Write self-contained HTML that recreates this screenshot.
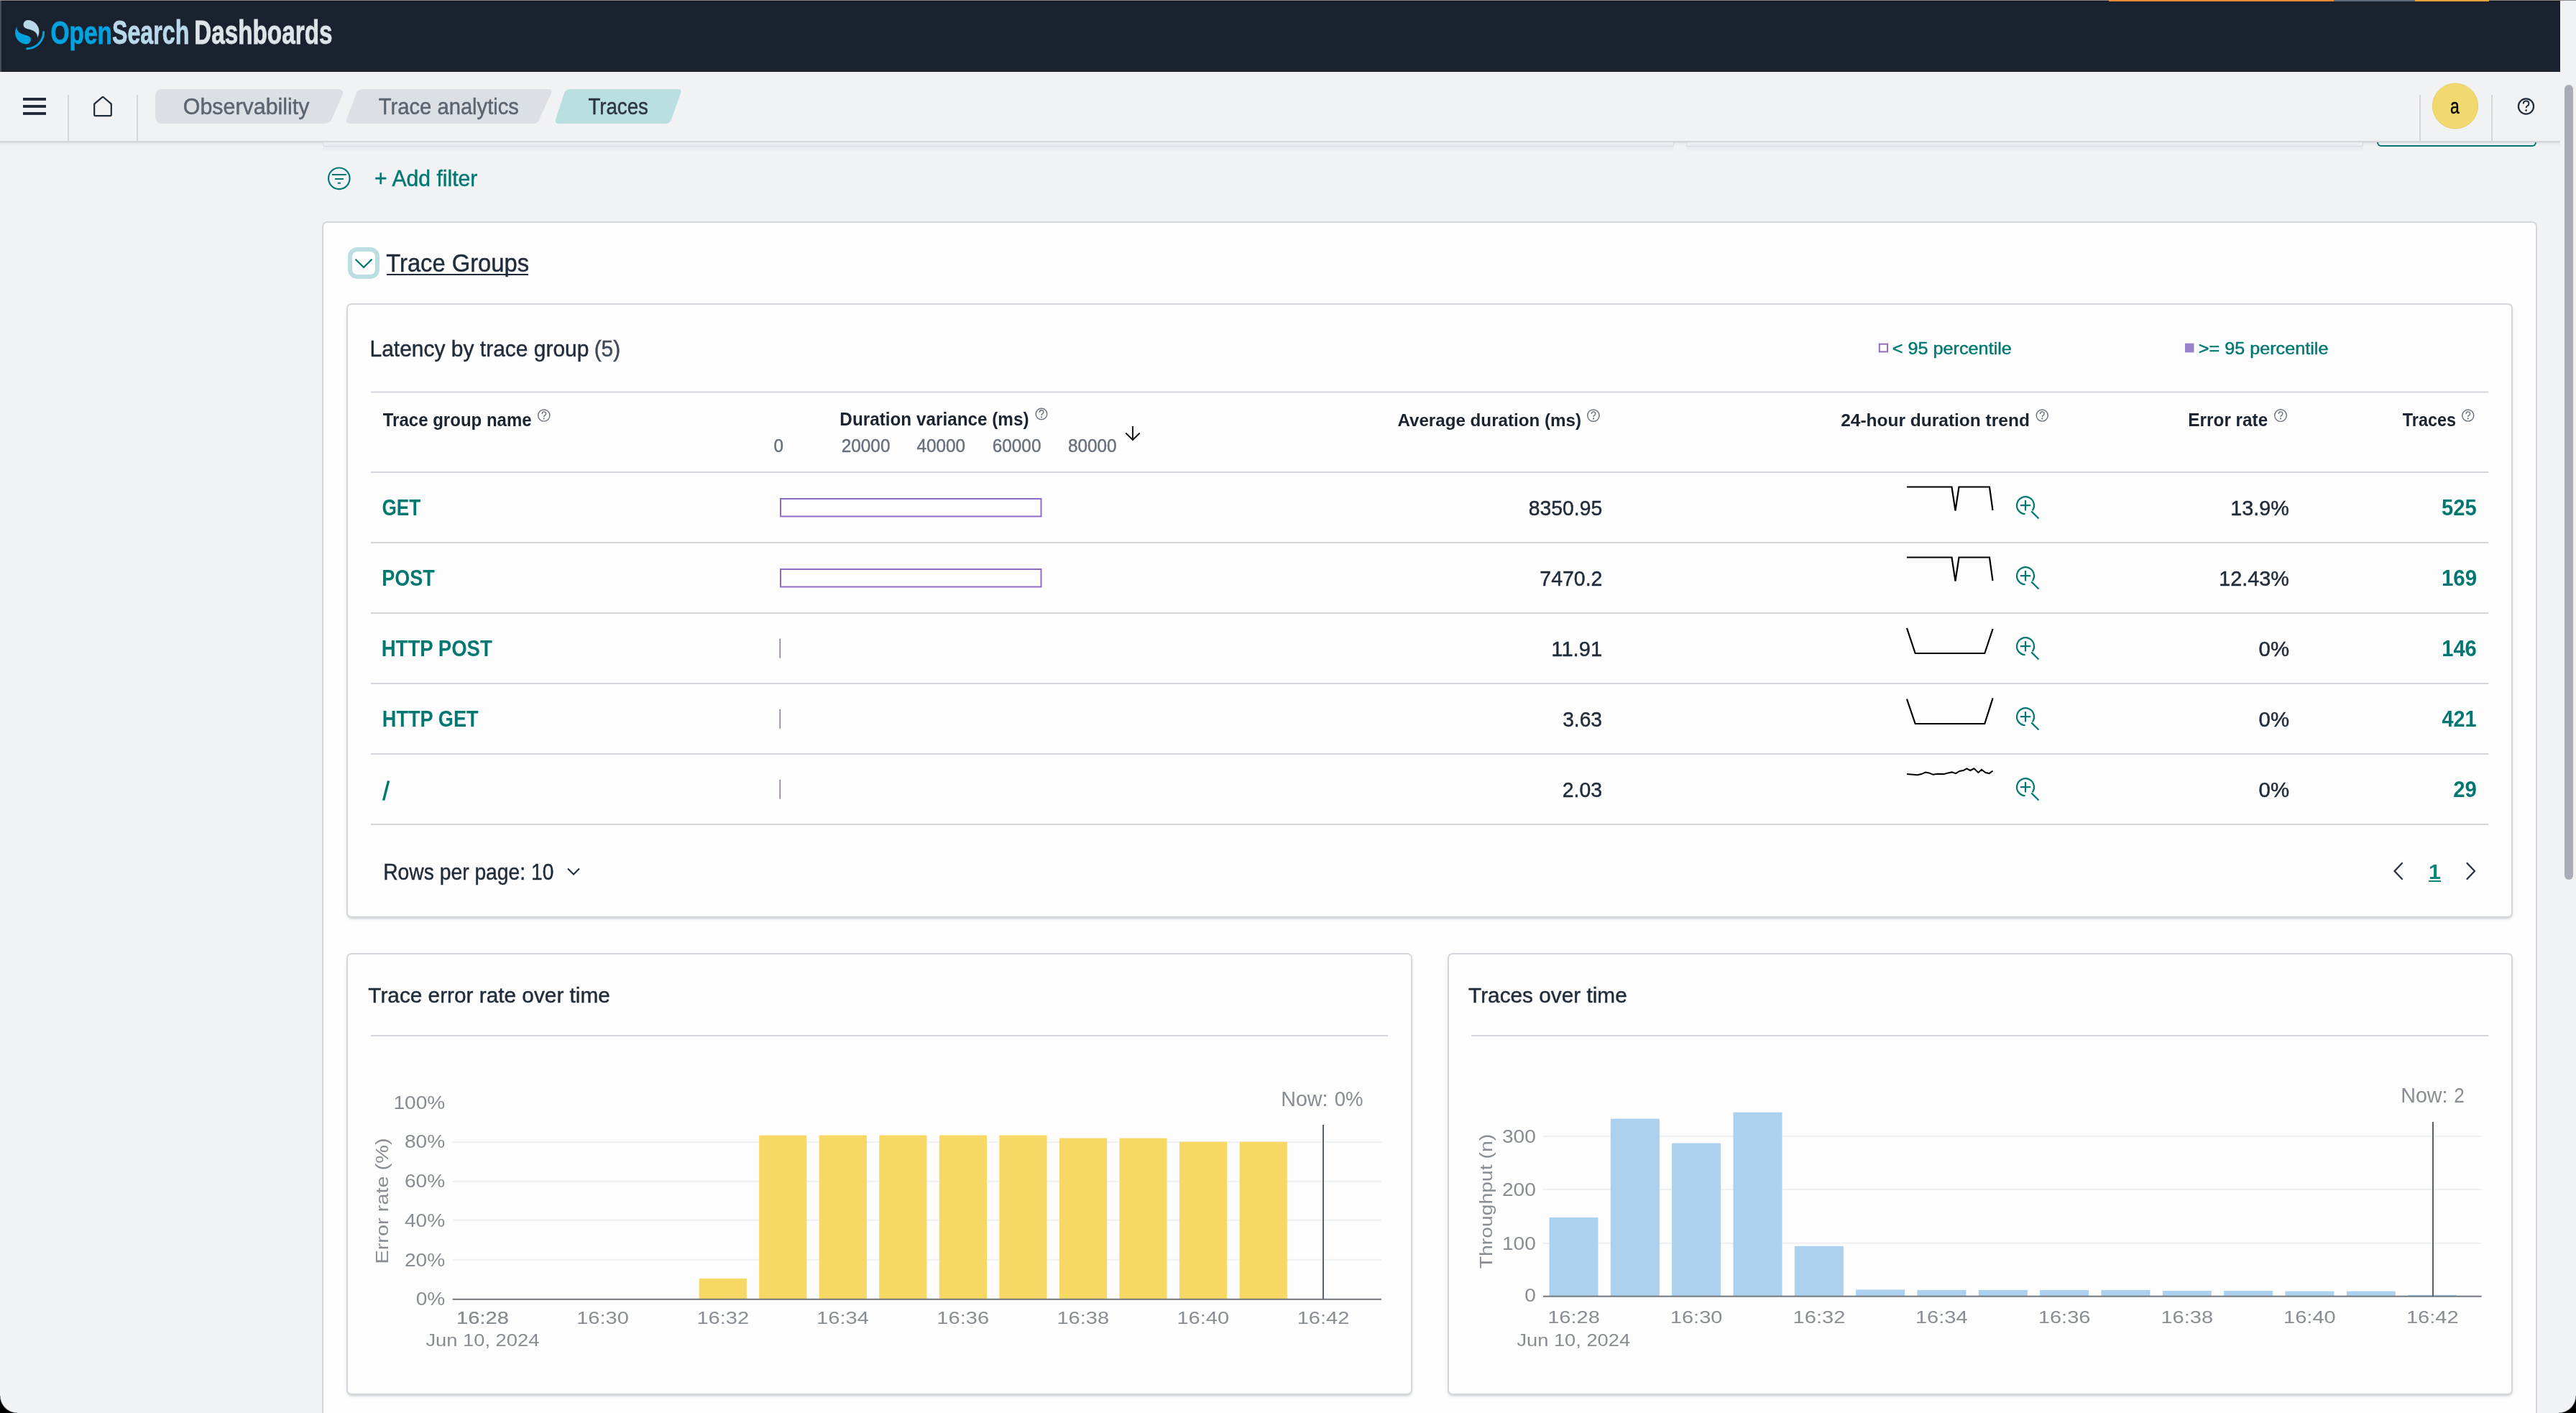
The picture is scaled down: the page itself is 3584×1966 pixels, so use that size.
<!DOCTYPE html>
<html><head><meta charset="utf-8"><title>Traces - OpenSearch Dashboards</title>
<style>
html,body{margin:0;padding:0;width:3584px;height:1966px;overflow:hidden;background:#f1f2f4;font-family:"Liberation Sans",sans-serif}
.a{position:absolute}
svg text{font-family:"Liberation Sans",sans-serif}
</style></head><body>
<div class="a" style="left:0px;top:0px;width:3562px;height:100px;background:#19222e"></div>
<div class="a" style="left:0px;top:0px;width:2px;height:100px;background:#434d57"></div>
<div class="a" style="left:0px;top:0px;width:3584px;height:1px;background:#8c8c8c"></div>
<div class="a" style="left:2px;top:1px;width:3560px;height:1px;background:#0b0f13"></div>
<div class="a" style="left:2934px;top:0px;width:313px;height:2px;background:#e8873a"></div>
<div class="a" style="left:3247px;top:0px;width:113px;height:2px;background:#5b6b7b"></div>
<div class="a" style="left:3360px;top:0px;width:103px;height:2px;background:#e8a03a"></div>
<div class="a" style="left:0px;top:196px;width:3562px;height:9px;background:linear-gradient(#d3d6db 0px,#d5d8dd 2px,#e6e8eb 3px,#eceef0 5px,#f1f2f4 9px)"></div>
<div class="a" style="left:449px;top:204px;width:1880px;height:7px;background:linear-gradient(#e6e9ed,#f1f2f4)"></div>
<div class="a" style="left:449px;top:198px;width:1880px;height:6px;background:#eaedf0;border-left:1.5px solid #d6dbe2;border-right:1.5px solid #d6dbe2;border-bottom:1.5px solid #d6dbe2;box-sizing:border-box;border-radius:0 0 3px 3px"></div>
<div class="a" style="left:2346px;top:204px;width:942px;height:7px;background:linear-gradient(#e6e9ed,#f1f2f4)"></div>
<div class="a" style="left:2346px;top:198px;width:942px;height:6px;background:#eaedf0;border-left:1.5px solid #d6dbe2;border-right:1.5px solid #d6dbe2;border-bottom:1.5px solid #d6dbe2;box-sizing:border-box;border-radius:0 0 3px 3px"></div>
<div class="a" style="left:3307px;top:198px;width:222px;height:6px;border:2px solid #007871;border-top:none;border-radius:0 0 8px 8px;box-sizing:border-box"></div>
<div class="a" style="left:94px;top:132px;width:2px;height:64px;background:#d3d7dd"></div>
<div class="a" style="left:190px;top:132px;width:2px;height:64px;background:#d3d7dd"></div>
<div class="a" style="left:3366px;top:132px;width:2px;height:64px;background:#d3d7dd"></div>
<div class="a" style="left:3466px;top:132px;width:2px;height:64px;background:#d3d7dd"></div>
<div class="a" style="left:3568px;top:118px;width:12px;height:1106px;background:#a6adb6;border-radius:6px"></div>
<div class="a" style="left:448px;top:308px;width:3082px;height:1792px;background:#fdfdfe;border:2px solid #d3d7dc;border-radius:7px;box-sizing:border-box"></div>
<div class="a" style="left:482px;top:422px;width:3014px;height:855px;background:#fdfdfe;border:2px solid #d3d7dc;border-radius:7px;box-sizing:border-box;box-shadow:0 2px 3px -1px rgba(100,110,125,.25),0 3px 7px -3px rgba(100,110,125,.2)"></div>
<div class="a" style="left:482px;top:1326px;width:1483px;height:615px;background:#fdfdfe;border:2px solid #d3d7dc;border-radius:7px;box-sizing:border-box;box-shadow:0 2px 3px -1px rgba(100,110,125,.25),0 3px 7px -3px rgba(100,110,125,.2)"></div>
<div class="a" style="left:2014px;top:1326px;width:1482px;height:615px;background:#fdfdfe;border:2px solid #d3d7dc;border-radius:7px;box-sizing:border-box;box-shadow:0 2px 3px -1px rgba(100,110,125,.25),0 3px 7px -3px rgba(100,110,125,.2)"></div>
<div class="a" style="left:0;top:1942px;width:24px;height:24px;background:radial-gradient(circle at 24px 0,rgba(0,0,0,0) 23px,#000 24.5px)"></div>
<div class="a" style="left:3560px;top:1942px;width:24px;height:24px;background:radial-gradient(circle at 0 0,rgba(0,0,0,0) 23px,#000 24.5px)"></div>
<svg class="a" style="left:0;top:0;will-change:transform" width="3584" height="1966" viewBox="0 0 3584 1966">
<g transform="translate(21,28) scale(0.643)"><path fill="#00a3e0" d="M61.7374 23.5C60.4878 23.5 59.4748 24.513 59.4748 25.7626C59.4748 44.3813 44.3813 59.4748 25.7626 59.4748C24.513 59.4748 23.5 60.4878 23.5 61.7374C23.5 62.987 24.513 64 25.7626 64C46.8805 64 64 46.8805 64 25.7626C64 24.513 62.987 23.5 61.7374 23.5Z"/><path fill="#b9d9eb" d="M48.0814 38C50.2572 34.4505 52.3615 29.7178 51.9475 23.0921C51.0899 9.36725 38.6589 -1.04463 26.9206 0.0837327C22.3253 0.525465 17.6068 4.2712 18.026 10.9805C18.2082 13.8961 19.6352 15.6169 21.9544 16.9399C24.1618 18.1992 26.9978 18.9969 30.2128 19.9011C34.0962 20.9934 38.6009 22.2203 42.063 24.7717C46.2125 27.8295 49.0491 31.3743 48.0814 38Z"/><path fill="#00a3e0" d="M3.91861 14C1.74276 17.5495 -0.361506 22.2822 0.0524931 28.9079C0.910072 42.6327 13.3411 53.0446 25.0794 51.9163C29.6747 51.4745 34.3932 47.7288 33.974 41.0195C33.7918 38.1039 32.3647 36.3831 30.0456 35.0601C27.8382 33.8008 25.0022 33.0031 21.7872 32.0989C17.9038 31.0066 13.3991 29.7797 9.93694 27.2283C5.78746 24.1704 2.95092 20.6257 3.91861 14Z"/></g>
<text transform="matrix(0.7414 0 0 1 70.46 61.00)" font-size="45.16" font-weight="bold" stroke="#00a3e0" stroke-width="0.8" fill="#00a3e0">Open</text>
<text transform="matrix(0.6942 0 0 1 156.03 61.00)" font-size="46.34" font-weight="bold" stroke="#b9d9eb" stroke-width="0.8" fill="#b9d9eb">Search</text>
<text transform="matrix(0.7185 0 0 1 270.15 61.00)" font-size="46.34" font-weight="bold" stroke="#dee4e8" stroke-width="0.8" fill="#dee4e8">Dashboards</text>
<rect x="32" y="136" width="32" height="3.9" fill="#1f2c3b"/>
<rect x="32" y="146" width="32" height="3.9" fill="#1f2c3b"/>
<rect x="32" y="156" width="32" height="3.9" fill="#1f2c3b"/>
<path d="M131.2 144.6 L142.1 135.3 Q143 134.5 143.9 135.3 L154.8 144.6 L154.8 160.1 Q154.8 161.1 153.8 161.1 L132.2 161.1 Q131.2 161.1 131.2 160.1 Z" fill="none" stroke="#1f2c3b" stroke-width="2.2" stroke-linejoin="round"/>
<path d="M226 124 L470 124 Q479 124 476.5 132 L462 165 Q459 172 451 172 L226 172 Q216 172 216 162 L216 134 Q216 124 226 124 Z" fill="#dcdfe4"/>
<path d="M505 124 L763.8 124 Q769 124 767 129.6 L750 166.4 Q748 172 741 172 L488 172 Q480 172 482 166.4 L496 129.6 Q498 124 505 124 Z" fill="#dcdfe4"/>
<path d="M794 124 L943.8 124 Q949 124 947 129.6 L934 166.4 Q932 172 925 172 L779 172 Q771 172 773 166.4 L785 129.6 Q787 124 794 124 Z" fill="#b9dfe0"/>
<text transform="matrix(0.9670 0 0 1 254.81 159.00)" font-size="31.45" stroke="#5b6470" stroke-width="0.45" fill="#5b6470">Observability</text>
<text transform="matrix(0.9280 0 0 1 526.84 159.00)" font-size="31.45" stroke="#5b6470" stroke-width="0.45" fill="#5b6470">Trace analytics</text>
<text transform="matrix(0.8851 0 0 1 818.38 159.00)" font-size="31.27" stroke="#2c3541" stroke-width="0.45" fill="#2c3541">Traces</text>
<circle cx="3416" cy="147.5" r="31.5" fill="#f1d86f" stroke="#e5cb5c" stroke-width="1"/>
<text transform="matrix(0.7997 0 0 1 3408.93 158.00)" font-size="28.65" stroke="#000" stroke-width="0.45" fill="#000">a</text>
<circle cx="3514.5" cy="148" r="10.6" fill="none" stroke="#1f2c3b" stroke-width="2.2"/>
<path d="M3510.8 144.6 Q3510.8 140.6 3514.6 140.6 Q3518.4 140.6 3518.4 144.2 Q3518.4 146.3 3516.3 147.3 Q3514.6 148.1 3514.6 150.2" fill="none" stroke="#1f2c3b" stroke-width="2"/>
<circle cx="3514.6" cy="153.6" r="1.3" fill="#1f2c3b"/>
<circle cx="471.8" cy="248.3" r="14.8" fill="none" stroke="#007871" stroke-width="2.1"/>
<path d="M462 243 H481.7 M466 249 H477.9 M469.8 254.8 H474" stroke="#007871" stroke-width="2.1"/>
<text transform="matrix(0.9722 0 0 1 521.07 259.00)" font-size="31.03" stroke="#007871" stroke-width="0.45" fill="#007871">+ Add filter</text>
<rect x="487" y="347" width="38" height="38" rx="10" fill="#fdfdfe" stroke="#b9dfe0" stroke-width="6"/>
<path d="M494.5 360.8 L506 372 L517.5 360.8" fill="none" stroke="#007871" stroke-width="2.2"/>
<text transform="matrix(0.9432 0 0 1 537.26 377.70)" font-size="34.70" stroke="#1f2b39" stroke-width="0.45" fill="#1f2b39">Trace Groups</text>
<rect x="538" y="381" width="197" height="2" fill="#1f2b39"/>
<text transform="matrix(0.9369 0 0 1 514.53 495.70)" font-size="32.00" stroke="#1f2b39" stroke-width="0.45" fill="#1f2b39">Latency by trace group</text>
<text transform="matrix(0.9369 0 0 1 826.63 495.70)" font-size="32.00" stroke="#3f4a57" stroke-width="0.45" fill="#3f4a57">(5)</text>
<rect x="2614.8" y="478.7" width="11.2" height="10.7" fill="none" stroke="#9170b8" stroke-width="2"/>
<text transform="matrix(1.0624 0 0 1 2632.84 492.80)" font-size="23.72" stroke="#007871" stroke-width="0.45" fill="#007871">&lt; 95 percentile</text>
<rect x="3040" y="477.7" width="12.5" height="12.7" fill="#9882c9"/>
<text transform="matrix(1.0624 0 0 1 3058.74 492.80)" font-size="23.72" stroke="#007871" stroke-width="0.45" fill="#007871">&gt;= 95 percentile</text>
<rect x="516" y="544.5" width="2946" height="2" fill="#d4d6dd"/>
<rect x="516" y="656.0" width="2946" height="2" fill="#d4d6dd"/>
<rect x="516" y="754.0" width="2946" height="2" fill="#d4d6dd"/>
<rect x="516" y="852.0" width="2946" height="2" fill="#d4d6dd"/>
<rect x="516" y="950.0" width="2946" height="2" fill="#d4d6dd"/>
<rect x="516" y="1048.0" width="2946" height="2" fill="#d4d6dd"/>
<rect x="516" y="1146.0" width="2946" height="2" fill="#d4d6dd"/>
<text transform="matrix(0.9080 0 0 1 532.76 593.20)" font-size="26.47" font-weight="bold" fill="#1a2531">Trace group name</text>
<circle cx="756.80" cy="578.05" r="8.10" fill="none" stroke="#69707d" stroke-width="1.4"/>
<path d="M754.20 576.05 Q754.20 572.85 756.80 572.85 Q759.60 572.85 759.60 575.65 Q759.60 577.15 758.00 577.95 Q756.80 578.55 756.80 580.05" fill="none" stroke="#69707d" stroke-width="1.4"/>
<circle cx="756.80" cy="582.35" r="1.05" fill="#69707d"/>
<text transform="matrix(0.9680 0 0 1 1168.36 591.80)" font-size="25.10" font-weight="bold" fill="#1a2531">Duration variance (ms)</text>
<circle cx="1449.00" cy="576.00" r="7.80" fill="none" stroke="#69707d" stroke-width="1.4"/>
<path d="M1446.40 574.00 Q1446.40 570.80 1449.00 570.80 Q1451.80 570.80 1451.80 573.60 Q1451.80 575.10 1450.20 575.90 Q1449.00 576.50 1449.00 578.00" fill="none" stroke="#69707d" stroke-width="1.4"/>
<circle cx="1449.00" cy="580.30" r="1.05" fill="#69707d"/>
<text transform="matrix(0.9734 0 0 1 1944.40 593.00)" font-size="24.83" font-weight="bold" fill="#1a2531">Average duration (ms)</text>
<circle cx="2216.88" cy="578.12" r="8.18" fill="none" stroke="#69707d" stroke-width="1.4"/>
<path d="M2214.28 576.12 Q2214.28 572.92 2216.88 572.92 Q2219.68 572.92 2219.68 575.73 Q2219.68 577.23 2218.07 578.02 Q2216.88 578.62 2216.88 580.12" fill="none" stroke="#69707d" stroke-width="1.4"/>
<circle cx="2216.88" cy="582.42" r="1.05" fill="#69707d"/>
<text transform="matrix(0.9877 0 0 1 2561.14 593.00)" font-size="24.83" font-weight="bold" fill="#1a2531">24-hour duration trend</text>
<circle cx="2841.25" cy="578.12" r="8.05" fill="none" stroke="#69707d" stroke-width="1.4"/>
<path d="M2838.65 576.12 Q2838.65 572.92 2841.25 572.92 Q2844.05 572.92 2844.05 575.73 Q2844.05 577.23 2842.45 578.02 Q2841.25 578.62 2841.25 580.12" fill="none" stroke="#69707d" stroke-width="1.4"/>
<circle cx="2841.25" cy="582.42" r="1.05" fill="#69707d"/>
<text transform="matrix(0.9297 0 0 1 3044.36 593.00)" font-size="26.18" font-weight="bold" fill="#1a2531">Error rate</text>
<circle cx="3173.00" cy="578.12" r="8.30" fill="none" stroke="#69707d" stroke-width="1.4"/>
<path d="M3170.40 576.12 Q3170.40 572.92 3173.00 572.92 Q3175.80 572.92 3175.80 575.73 Q3175.80 577.23 3174.20 578.02 Q3173.00 578.62 3173.00 580.12" fill="none" stroke="#69707d" stroke-width="1.4"/>
<circle cx="3173.00" cy="582.42" r="1.05" fill="#69707d"/>
<text transform="matrix(0.8944 0 0 1 3342.77 593.00)" font-size="26.18" font-weight="bold" fill="#1a2531">Traces</text>
<circle cx="3433.75" cy="578.12" r="8.05" fill="none" stroke="#69707d" stroke-width="1.4"/>
<path d="M3431.15 576.12 Q3431.15 572.92 3433.75 572.92 Q3436.55 572.92 3436.55 575.73 Q3436.55 577.23 3434.95 578.02 Q3433.75 578.62 3433.75 580.12" fill="none" stroke="#69707d" stroke-width="1.4"/>
<circle cx="3433.75" cy="582.42" r="1.05" fill="#69707d"/>
<text transform="matrix(0.9533 0 0 1 1170.78 629.00)" font-size="25.52" stroke="#69707d" stroke-width="0.45" fill="#69707d">20000</text>
<text transform="matrix(0.9533 0 0 1 1076.53 629.00)" font-size="25.52" stroke="#69707d" stroke-width="0.45" fill="#69707d">0</text>
<text transform="matrix(0.9533 0 0 1 1275.45 629.00)" font-size="25.52" stroke="#69707d" stroke-width="0.45" fill="#69707d">40000</text>
<text transform="matrix(0.9533 0 0 1 1380.78 629.00)" font-size="25.52" stroke="#69707d" stroke-width="0.45" fill="#69707d">60000</text>
<text transform="matrix(0.9533 0 0 1 1485.97 629.00)" font-size="25.52" stroke="#69707d" stroke-width="0.45" fill="#69707d">80000</text>
<path d="M1576 593 V611.5 M1566.3 602.5 L1576 612 L1585.7 602.5" fill="none" stroke="#1a1c21" stroke-width="2"/>
<text transform="matrix(0.8595 0 0 1 531.45 717.00)" font-size="30.47" font-weight="bold" fill="#007871">GET</text>
<text transform="matrix(0.9523 0 0 1 2126.80 717.00)" font-size="29.75" stroke="#1f2b39" stroke-width="0.45" fill="#1f2b39">8350.95</text>
<text transform="matrix(0.9675 0 0 1 3103.34 717.00)" font-size="29.75" stroke="#1f2b39" stroke-width="0.45" fill="#1f2b39">13.9%</text>
<text transform="matrix(0.9582 0 0 1 3397.12 717.00)" font-size="30.47" font-weight="bold" fill="#007871">525</text>
<text transform="matrix(0.8873 0 0 1 531.18 815.00)" font-size="30.47" font-weight="bold" fill="#007871">POST</text>
<text transform="matrix(0.9576 0 0 1 2142.33 815.00)" font-size="29.75" stroke="#1f2b39" stroke-width="0.45" fill="#1f2b39">7470.2</text>
<text transform="matrix(0.9677 0 0 1 3087.34 815.00)" font-size="29.75" stroke="#1f2b39" stroke-width="0.45" fill="#1f2b39">12.43%</text>
<text transform="matrix(0.9669 0 0 1 3396.91 815.00)" font-size="30.47" font-weight="bold" fill="#007871">169</text>
<text transform="matrix(0.9047 0 0 1 530.64 913.00)" font-size="30.47" font-weight="bold" fill="#007871">HTTP POST</text>
<text transform="matrix(0.9815 0 0 1 2158.31 913.00)" font-size="29.75" stroke="#1f2b39" stroke-width="0.45" fill="#1f2b39">11.91</text>
<text transform="matrix(0.9888 0 0 1 3142.52 913.00)" font-size="29.75" stroke="#1f2b39" stroke-width="0.45" fill="#1f2b39">0%</text>
<text transform="matrix(0.9575 0 0 1 3397.18 913.00)" font-size="30.47" font-weight="bold" fill="#007871">146</text>
<text transform="matrix(0.8924 0 0 1 531.76 1011.00)" font-size="30.47" font-weight="bold" fill="#007871">HTTP GET</text>
<text transform="matrix(0.9481 0 0 1 2174.14 1011.00)" font-size="29.75" stroke="#1f2b39" stroke-width="0.45" fill="#1f2b39">3.63</text>
<text transform="matrix(0.9888 0 0 1 3142.52 1011.00)" font-size="29.75" stroke="#1f2b39" stroke-width="0.45" fill="#1f2b39">0%</text>
<text transform="matrix(0.9473 0 0 1 3397.47 1011.00)" font-size="30.47" font-weight="bold" fill="#007871">421</text>
<path d="M540.6 1086.3 L533.6 1113.7" stroke="#007871" stroke-width="3.4"/>
<text transform="matrix(0.9545 0 0 1 2173.78 1109.00)" font-size="29.75" stroke="#1f2b39" stroke-width="0.45" fill="#1f2b39">2.03</text>
<text transform="matrix(0.9888 0 0 1 3142.52 1109.00)" font-size="29.75" stroke="#1f2b39" stroke-width="0.45" fill="#1f2b39">0%</text>
<text transform="matrix(0.9626 0 0 1 3413.27 1109.00)" font-size="30.47" font-weight="bold" fill="#007871">29</text>
<rect x="1086" y="694" width="362.5" height="24.5" fill="#ffffff" stroke="#8e6cc4" stroke-width="2"/>
<rect x="1086" y="792" width="362.5" height="24.5" fill="#ffffff" stroke="#8e6cc4" stroke-width="2"/>
<rect x="1084.5" y="888.75" width="1.5" height="27" fill="#9170b8"/>
<rect x="1084.5" y="986.75" width="1.5" height="27" fill="#9170b8"/>
<rect x="1084.5" y="1084.75" width="1.5" height="27" fill="#9170b8"/>
<polyline points="2653.0,677.5 2715.5,677.5 2720.5,710.5 2725.5,677.5 2768.0,677.5 2772.5,710.0" fill="none" stroke="#000" stroke-width="2.2" stroke-linejoin="miter"/>
<polyline points="2653.0,775.5 2715.5,775.5 2720.5,808.5 2725.5,775.5 2768.0,775.5 2772.5,808.0" fill="none" stroke="#000" stroke-width="2.2" stroke-linejoin="miter"/>
<polyline points="2653.0,873.8 2664.7,909.0 2761.3,909.0 2772.6,875.0" fill="none" stroke="#000" stroke-width="2.2" stroke-linejoin="miter"/>
<polyline points="2653.0,972.7 2664.7,1007.0 2761.3,1007.0 2772.6,971.4" fill="none" stroke="#000" stroke-width="2.2" stroke-linejoin="miter"/>
<polyline points="2653.1,1077.1 2667.9,1078.2 2673.2,1077.1 2679.0,1074.6 2683.8,1075.4 2689.6,1077.8 2695.5,1076.7 2705.1,1076.9 2710.4,1075.4 2715.7,1074.4 2721.0,1076.1 2726.3,1072.9 2731.6,1072.0 2736.3,1069.3 2741.2,1072.0 2746.5,1069.3 2752.4,1075.0 2757.1,1070.8 2762.4,1075.0 2767.7,1076.1 2772.6,1072.5" fill="none" stroke="#000" stroke-width="2" stroke-linejoin="miter"/>
<path d="M2817.58 715.19 A12 12 0 1 1 2827.71 710.25" fill="none" stroke="#007871" stroke-width="2.2"/>
<path d="M2826.20 711.40 L2836.50 721.50 M2810.80 703.2 H2825.20 M2818 696.0 V710.4000000000001" fill="none" stroke="#007871" stroke-width="2.2"/>
<path d="M2817.58 813.19 A12 12 0 1 1 2827.71 808.25" fill="none" stroke="#007871" stroke-width="2.2"/>
<path d="M2826.20 809.40 L2836.50 819.50 M2810.80 801.2 H2825.20 M2818 794.0 V808.4000000000001" fill="none" stroke="#007871" stroke-width="2.2"/>
<path d="M2817.58 911.19 A12 12 0 1 1 2827.71 906.25" fill="none" stroke="#007871" stroke-width="2.2"/>
<path d="M2826.20 907.40 L2836.50 917.50 M2810.80 899.2 H2825.20 M2818 892.0 V906.4000000000001" fill="none" stroke="#007871" stroke-width="2.2"/>
<path d="M2817.58 1009.19 A12 12 0 1 1 2827.71 1004.25" fill="none" stroke="#007871" stroke-width="2.2"/>
<path d="M2826.20 1005.40 L2836.50 1015.50 M2810.80 997.2 H2825.20 M2818 990.0 V1004.4000000000001" fill="none" stroke="#007871" stroke-width="2.2"/>
<path d="M2817.58 1107.19 A12 12 0 1 1 2827.71 1102.25" fill="none" stroke="#007871" stroke-width="2.2"/>
<path d="M2826.20 1103.40 L2836.50 1113.50 M2810.80 1095.2 H2825.20 M2818 1088.0 V1102.4" fill="none" stroke="#007871" stroke-width="2.2"/>
<text transform="matrix(0.8867 0 0 1 533.17 1223.75)" font-size="31.90" stroke="#1f2b39" stroke-width="0.45" fill="#1f2b39">Rows per page: 10</text>
<path d="M790 1208.5 L798 1216.5 L806 1208.5" fill="none" stroke="#1f2b39" stroke-width="2"/>
<path d="M3342 1201 L3331.5 1212 L3342 1223" fill="none" stroke="#2b3440" stroke-width="2.4" stroke-linecap="round" stroke-linejoin="round"/>
<path d="M3432.5 1201 L3443 1212 L3432.5 1223" fill="none" stroke="#2b3440" stroke-width="2.4" stroke-linecap="round" stroke-linejoin="round"/>
<text transform="matrix(1.0197 0 0 1 3379.12 1222.80)" font-size="29.53" font-weight="bold" fill="#0c857c">1</text>
<rect x="3379" y="1225" width="17" height="2" fill="#0c857c"/>
<text transform="matrix(1.0042 0 0 1 512.33 1395.00)" font-size="29.66" stroke="#1f2b39" stroke-width="0.45" fill="#1f2b39">Trace error rate over time</text>
<text transform="matrix(1.0042 0 0 1 2043.08 1395.00)" font-size="29.66" stroke="#1f2b39" stroke-width="0.45" fill="#1f2b39">Traces over time</text>
<rect x="516" y="1440.0" width="1415" height="2" fill="#d4d6dd"/>
<rect x="2047" y="1440.0" width="1415" height="2" fill="#d4d6dd"/>
<rect x="629.6" y="1588.2" width="1292.4" height="2" fill="#eef0f3"/>
<rect x="629.6" y="1642.8" width="1292.4" height="2" fill="#eef0f3"/>
<rect x="629.6" y="1696.6" width="1292.4" height="2" fill="#eef0f3"/>
<rect x="629.6" y="1751.8" width="1292.4" height="2" fill="#eef0f3"/>
<text transform="matrix(1.0598 0 0 1 547.39 1542.50)" font-size="26.52" fill="#878d93">100%</text>
<text transform="matrix(1.0598 0 0 1 562.99 1597.00)" font-size="26.52" fill="#878d93">80%</text>
<text transform="matrix(1.0598 0 0 1 562.99 1652.30)" font-size="26.52" fill="#878d93">60%</text>
<text transform="matrix(1.0598 0 0 1 562.99 1706.60)" font-size="26.52" fill="#878d93">40%</text>
<text transform="matrix(1.0598 0 0 1 562.99 1761.90)" font-size="26.52" fill="#878d93">20%</text>
<text transform="matrix(1.0598 0 0 1 578.66 1815.60)" font-size="26.52" fill="#878d93">0%</text>
<rect x="972.60" y="1778.80" width="66.2" height="28.20" fill="#f8d864"/>
<rect x="1056.15" y="1579.60" width="66.2" height="227.40" fill="#f8d864"/>
<rect x="1139.70" y="1579.50" width="66.2" height="227.50" fill="#f8d864"/>
<rect x="1223.25" y="1579.50" width="66.2" height="227.50" fill="#f8d864"/>
<rect x="1306.80" y="1579.50" width="66.2" height="227.50" fill="#f8d864"/>
<rect x="1390.35" y="1579.50" width="66.2" height="227.50" fill="#f8d864"/>
<rect x="1473.90" y="1583.60" width="66.2" height="223.40" fill="#f8d864"/>
<rect x="1557.45" y="1583.60" width="66.2" height="223.40" fill="#f8d864"/>
<rect x="1641.00" y="1588.70" width="66.2" height="218.30" fill="#f8d864"/>
<rect x="1724.55" y="1588.70" width="66.2" height="218.30" fill="#f8d864"/>
<rect x="629.6" y="1806.8" width="1292.4" height="2" fill="#71777d"/>
<rect x="1840" y="1565" width="2" height="243" fill="#5a6067"/>
<text transform="matrix(0.9980 0 0 1 1782.13 1538.80)" font-size="28.80" fill="#878d93">Now:</text>
<text transform="matrix(0.9580 0 0 1 1856.70 1538.80)" font-size="28.80" fill="#878d93">0%</text>
<text transform="matrix(1.2283 0 0 1 635.12 1841.50)" font-size="23.66" fill="#878d93">16:28</text>
<text transform="matrix(1.2283 0 0 1 635.17 1841.50)" font-size="23.66" fill="#878d93">16:28</text>
<text transform="matrix(1.2283 0 0 1 802.15 1841.50)" font-size="23.66" fill="#878d93">16:30</text>
<text transform="matrix(1.2283 0 0 1 969.38 1841.50)" font-size="23.66" fill="#878d93">16:32</text>
<text transform="matrix(1.2283 0 0 1 1136.10 1841.50)" font-size="23.66" fill="#878d93">16:34</text>
<text transform="matrix(1.2283 0 0 1 1303.37 1841.50)" font-size="23.66" fill="#878d93">16:36</text>
<text transform="matrix(1.2283 0 0 1 1470.42 1841.50)" font-size="23.66" fill="#878d93">16:38</text>
<text transform="matrix(1.2283 0 0 1 1637.40 1841.50)" font-size="23.66" fill="#878d93">16:40</text>
<text transform="matrix(1.2283 0 0 1 1804.63 1841.50)" font-size="23.66" fill="#878d93">16:42</text>
<text transform="matrix(1.1555 0 0 1 592.39 1873.10)" font-size="23.66" fill="#878d93">Jun 10, 2024</text>
<text transform="translate(539.75 1758.59) rotate(-90) scale(1.2240 1)" font-size="23.66" fill="#878d93">Error rate (%)</text>
<rect x="2147" y="1579.9" width="1305.6" height="2" fill="#eef0f3"/>
<rect x="2147" y="1654.0" width="1305.6" height="2" fill="#eef0f3"/>
<rect x="2147" y="1728.8" width="1305.6" height="2" fill="#eef0f3"/>
<text transform="matrix(1.0598 0 0 1 2089.88 1590.00)" font-size="26.52" fill="#878d93">300</text>
<text transform="matrix(1.0598 0 0 1 2089.88 1664.20)" font-size="26.52" fill="#878d93">200</text>
<text transform="matrix(1.0598 0 0 1 2089.88 1738.60)" font-size="26.52" fill="#878d93">100</text>
<text transform="matrix(1.0598 0 0 1 2121.15 1811.40)" font-size="26.52" fill="#878d93">0</text>
<rect x="2155.50" y="1693.90" width="68" height="109.10" fill="#abd1ee"/>
<rect x="2240.83" y="1556.60" width="68" height="246.40" fill="#abd1ee"/>
<rect x="2326.16" y="1590.60" width="68" height="212.40" fill="#abd1ee"/>
<rect x="2411.49" y="1547.60" width="68" height="255.40" fill="#abd1ee"/>
<rect x="2496.82" y="1733.80" width="68" height="69.20" fill="#abd1ee"/>
<rect x="2582.15" y="1794.40" width="68" height="8.60" fill="#abd1ee"/>
<rect x="2667.48" y="1794.90" width="68" height="8.10" fill="#abd1ee"/>
<rect x="2752.81" y="1794.90" width="68" height="8.10" fill="#abd1ee"/>
<rect x="2838.14" y="1794.90" width="68" height="8.10" fill="#abd1ee"/>
<rect x="2923.47" y="1794.90" width="68" height="8.10" fill="#abd1ee"/>
<rect x="3008.80" y="1796.00" width="68" height="7.00" fill="#abd1ee"/>
<rect x="3094.13" y="1796.00" width="68" height="7.00" fill="#abd1ee"/>
<rect x="3179.46" y="1796.60" width="68" height="6.40" fill="#abd1ee"/>
<rect x="3264.79" y="1796.60" width="68" height="6.40" fill="#abd1ee"/>
<rect x="3350.12" y="1801.70" width="68" height="1.30" fill="#abd1ee"/>
<rect x="2147" y="1802.7" width="1305.6" height="2" fill="#71777d"/>
<rect x="3384" y="1561" width="2" height="243" fill="#5a6067"/>
<text transform="matrix(0.9980 0 0 1 3340.13 1533.70)" font-size="28.80" fill="#878d93">Now:</text>
<text transform="matrix(0.9081 0 0 1 3414.19 1533.70)" font-size="28.80" fill="#878d93">2</text>
<text transform="matrix(1.2283 0 0 1 2153.17 1841.10)" font-size="23.66" fill="#878d93">16:28</text>
<text transform="matrix(1.2283 0 0 1 2323.76 1841.10)" font-size="23.66" fill="#878d93">16:30</text>
<text transform="matrix(1.2283 0 0 1 2494.60 1841.10)" font-size="23.66" fill="#878d93">16:32</text>
<text transform="matrix(1.2283 0 0 1 2664.93 1841.10)" font-size="23.66" fill="#878d93">16:34</text>
<text transform="matrix(1.2283 0 0 1 2835.81 1841.10)" font-size="23.66" fill="#878d93">16:36</text>
<text transform="matrix(1.2283 0 0 1 3006.47 1841.10)" font-size="23.66" fill="#878d93">16:38</text>
<text transform="matrix(1.2283 0 0 1 3177.06 1841.10)" font-size="23.66" fill="#878d93">16:40</text>
<text transform="matrix(1.2283 0 0 1 3347.90 1841.10)" font-size="23.66" fill="#878d93">16:42</text>
<text transform="matrix(1.1533 0 0 1 2110.39 1873.00)" font-size="23.66" fill="#878d93">Jun 10, 2024</text>
<text transform="translate(2076.45 1765.34) rotate(-90) scale(1.1997 1)" font-size="23.66" fill="#878d93">Throughput (n)</text>
</svg>
</body></html>
